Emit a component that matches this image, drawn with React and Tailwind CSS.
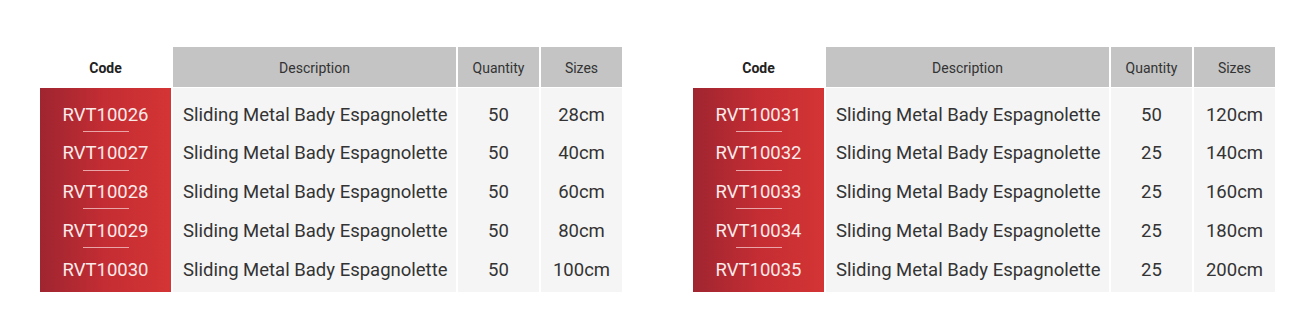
import React from 'react';

const left = [
  { code: 'RVT10026', qty: 50, size: '28cm' },
  { code: 'RVT10027', qty: 50, size: '40cm' },
  { code: 'RVT10028', qty: 50, size: '60cm' },
  { code: 'RVT10029', qty: 50, size: '80cm' },
  { code: 'RVT10030', qty: 50, size: '100cm' },
];

const right = [
  { code: 'RVT10031', qty: 50, size: '120cm' },
  { code: 'RVT10032', qty: 25, size: '140cm' },
  { code: 'RVT10033', qty: 25, size: '160cm' },
  { code: 'RVT10034', qty: 25, size: '180cm' },
  { code: 'RVT10035', qty: 25, size: '200cm' },
];

const DESC = 'Sliding Metal Bady Espagnolette';

function ProductTable({ rows }) {
  return (
    <div className="w-[582px] text-[#333]">
      {/* Header */}
      <div className="flex gap-[2px] h-[40px] text-[14px]">
        <div className="w-[131px] pt-[2px] flex items-center justify-center font-bold text-[#222]">Code</div>
        <div className="w-[283px] pt-[2px] flex items-center justify-center bg-[#c4c4c4]">Description</div>
        <div className="w-[81px] pt-[2px] flex items-center justify-center bg-[#c4c4c4]">Quantity</div>
        <div className="w-[81px] pt-[2px] flex items-center justify-center bg-[#c4c4c4]">Sizes</div>
      </div>

      {/* Body */}
      <div className="flex gap-[2px] mt-[1px] text-[18.5px]">
        <div className="w-[131px] pt-[8px] pb-[2.25px] bg-gradient-to-r from-[#9f2530] via-[#c42d33] to-[#d43434] text-[#fbeaea]">
          {rows.map((r, i) => (
            <div key={r.code} className="relative h-[38.75px] flex items-center justify-center">
              {r.code}
              {i < rows.length - 1 && (
                <span className="absolute bottom-[3px] left-1/2 -translate-x-1/2 w-[46px] h-[1px] bg-[#eaa5a8]" />
              )}
            </div>
          ))}
        </div>
        <div className="w-[283px] pt-[8px] pb-[2.25px] pl-[10px] bg-[#f5f5f5]">
          {rows.map((r) => (
            <div key={r.code} className="h-[38.75px] flex items-center">{DESC}</div>
          ))}
        </div>
        <div className="w-[81px] pt-[8px] pb-[2.25px] bg-[#f5f5f5]">
          {rows.map((r) => (
            <div key={r.code} className="h-[38.75px] flex items-center justify-center">{r.qty}</div>
          ))}
        </div>
        <div className="w-[81px] pt-[8px] pb-[2.25px] bg-[#f5f5f5]">
          {rows.map((r) => (
            <div key={r.code} className="h-[38.75px] flex items-center justify-center">{r.size}</div>
          ))}
        </div>
      </div>
    </div>
  );
}

export default function App() {
  return (
    <div className="w-[1300px] h-[320px] bg-white font-['Roboto',sans-serif]">
      <div className="flex gap-[71px] pl-[40px] pt-[47px]">
        <ProductTable rows={left} />
        <ProductTable rows={right} />
      </div>
    </div>
  );
}
